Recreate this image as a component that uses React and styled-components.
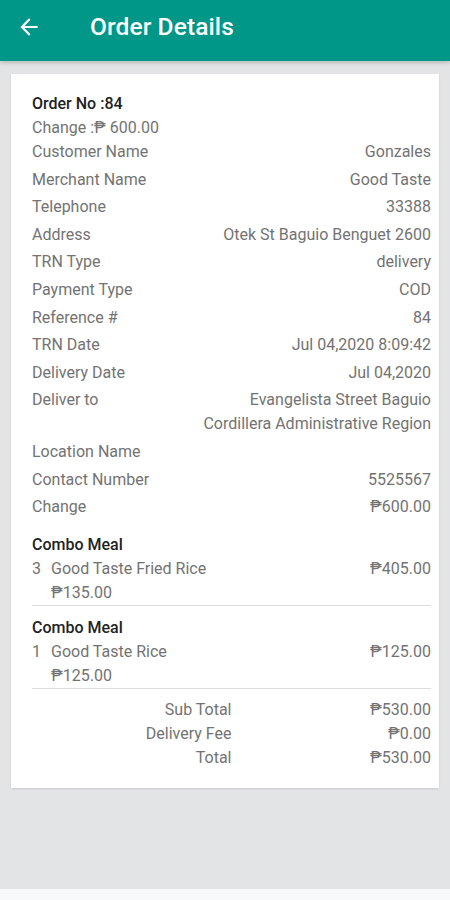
import React from 'react';
import styled, { createGlobalStyle } from 'styled-components';

const GlobalStyle = createGlobalStyle`
  html, body {
    margin: 0;
    padding: 0;
    background: #e3e4e5;
    font-family: Roboto, "Noto Sans", "Liberation Sans", sans-serif;
  }
`;

const Screen = styled.div`
  display: flex;
  flex-direction: column;
  height: 900px;
  background: #e3e4e5;
`;

const Header = styled.header`
  display: flex;
  align-items: center;
  height: 61px;
  background: #009688;
  color: #ffffff;
  box-shadow: 0 2px 4px rgba(0, 0, 0, 0.18);
  padding: 0 0 8px 16px;
  box-sizing: border-box;
  flex-shrink: 0;
`;

const BackButton = styled.button`
  display: flex;
  align-items: center;
  justify-content: center;
  width: 26px;
  height: 26px;
  padding: 0;
  border: none;
  background: none;
  color: #ffffff;
  cursor: pointer;
`;

const Title = styled.h1`
  margin: 0 0 0 48px;
  font-size: 24.5px;
  font-weight: 500;
  letter-spacing: 0.1px;
`;

const Content = styled.main`
  flex: 1;
  padding: 13px 11px;
`;

const Card = styled.section`
  background: #ffffff;
  padding: 18px 8px 18px 21px;
  box-shadow: 0 1px 2px rgba(0, 0, 0, 0.12);
  font-size: 16px;
  line-height: 24px;
  color: #737373;
`;

const Heading = styled.div`
  color: #222222;
  font-weight: 500;
`;

const Line = styled.div`
  color: #737373;
`;

const InfoRow = styled.div`
  display: flex;
  justify-content: space-between;
  align-items: flex-start;
  padding-bottom: 3.6px;
`;

const Value = styled.div`
  text-align: right;
  max-width: 240px;
`;

const Item = styled.div`
  margin-top: ${(p) => p.$gap}px;
  border-bottom: 1px solid #dddddd;
`;

const ItemRow = styled.div`
  display: grid;
  grid-template-columns: 19px 1fr auto;
`;

const SubPrice = styled.div`
  padding-left: 19px;
`;

const Totals = styled.div`
  display: grid;
  grid-template-columns: 1fr 1fr;
  margin-top: 9px;
`;

const Right = styled.div`
  text-align: right;
`;

const BottomBar = styled.div`
  height: 11px;
  background: #f8f9fa;
  flex-shrink: 0;
`;

const info = [
  ['Customer Name', 'Gonzales'],
  ['Merchant Name', 'Good Taste'],
  ['Telephone', '33388'],
  ['Address', 'Otek St Baguio Benguet 2600'],
  ['TRN Type', 'delivery'],
  ['Payment Type', 'COD'],
  ['Reference #', '84'],
  ['TRN Date', 'Jul 04,2020 8:09:42'],
  ['Delivery Date', 'Jul 04,2020'],
  ['Deliver to', 'Evangelista Street Baguio Cordillera Administrative Region'],
  ['Location Name', ''],
  ['Contact Number', '5525567'],
  ['Change', '₱600.00'],
];

const items = [
  { group: 'Combo Meal', qty: 3, name: 'Good Taste Fried Rice', total: '₱405.00', price: '₱135.00' },
  { group: 'Combo Meal', qty: 1, name: 'Good Taste Rice', total: '₱125.00', price: '₱125.00' },
];

const totals = [
  ['Sub Total', '₱530.00'],
  ['Delivery Fee', '₱0.00'],
  ['Total', '₱530.00'],
];

function ArrowBack() {
  return (
    <svg width="26" height="26" viewBox="0 0 24 24" fill="currentColor">
      <path d="M20 11H7.83l5.59-5.59L12 4l-8 8 8 8 1.41-1.41L7.83 13H20v-2z" />
    </svg>
  );
}

export default function App() {
  return (
    <Screen>
      <GlobalStyle />
      <Header>
        <BackButton aria-label="back">
          <ArrowBack />
        </BackButton>
        <Title>Order Details</Title>
      </Header>
      <Content>
        <Card>
          <Heading>Order No :84</Heading>
          <Line>Change :₱ 600.00</Line>
          {info.map(([label, value]) => (
            <InfoRow key={label}>
              <div>{label}</div>
              <Value>{value}</Value>
            </InfoRow>
          ))}
          {items.map((it, i) => (
            <Item key={i} $gap={i === 0 ? 10.4 : 10}>
              <Heading>{it.group}</Heading>
              <ItemRow>
                <div>{it.qty}</div>
                <div>{it.name}</div>
                <Right>{it.total}</Right>
              </ItemRow>
              <SubPrice>{it.price}</SubPrice>
            </Item>
          ))}
          <Totals>
            {totals.map(([label, value]) => (
              <React.Fragment key={label}>
                <Right>{label}</Right>
                <Right>{value}</Right>
              </React.Fragment>
            ))}
          </Totals>
        </Card>
      </Content>
      <BottomBar />
    </Screen>
  );
}
